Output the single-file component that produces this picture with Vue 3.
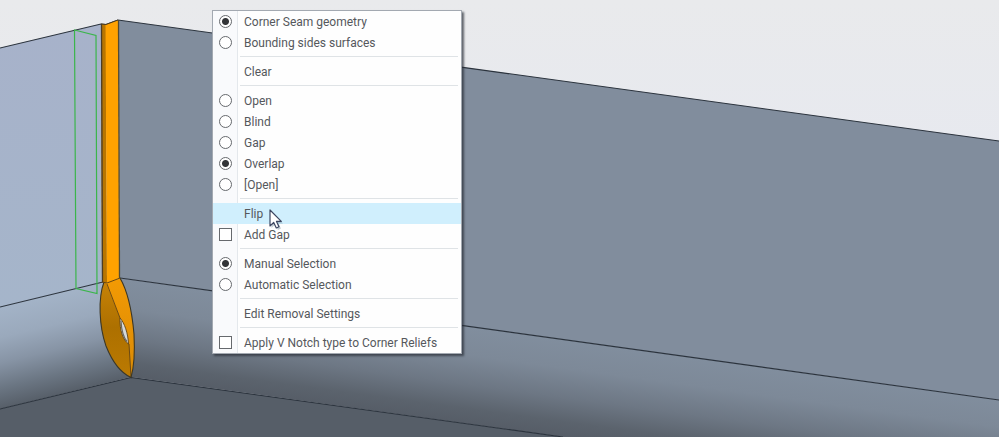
<script setup>
import { reactive } from 'vue'

const choice = reactive({ surface: 'geometry', seam: 'overlap', selection: 'manual' })
const flags = reactive({ addGap: false, vNotch: false })

const sections = [
  [
    { kind: 'radio', group: 'surface', value: 'geometry', label: 'Corner Seam geometry' },
    { kind: 'radio', group: 'surface', value: 'sides', label: 'Bounding sides surfaces' },
  ],
  [{ kind: 'action', label: 'Clear' }],
  [
    { kind: 'radio', group: 'seam', value: 'open', label: 'Open' },
    { kind: 'radio', group: 'seam', value: 'blind', label: 'Blind' },
    { kind: 'radio', group: 'seam', value: 'gap', label: 'Gap' },
    { kind: 'radio', group: 'seam', value: 'overlap', label: 'Overlap' },
    { kind: 'radio', group: 'seam', value: 'default', label: '[Open]' },
  ],
  [
    { kind: 'action', label: 'Flip', active: true },
    { kind: 'check', flag: 'addGap', label: 'Add Gap' },
  ],
  [
    { kind: 'radio', group: 'selection', value: 'manual', label: 'Manual Selection' },
    { kind: 'radio', group: 'selection', value: 'auto', label: 'Automatic Selection' },
  ],
  [{ kind: 'action', label: 'Edit Removal Settings' }],
  [{ kind: 'check', flag: 'vNotch', label: 'Apply V Notch type to Corner Reliefs' }],
]
</script>

<template>
  <main class="viewport">
    <svg class="model" viewBox="0 0 999 437" preserveAspectRatio="xMinYMin slice" aria-hidden="true">
      <defs>
        <linearGradient id="sky" x1="0" y1="0" x2="0" y2="1">
          <stop offset="0" stop-color="#e9eaec" />
          <stop offset="0.35" stop-color="#e7e9ef" />
        </linearGradient>
        <linearGradient id="leftWall" x1="0" y1="0" x2="0" y2="1">
          <stop offset="0" stop-color="#a7b2ca" />
          <stop offset="1" stop-color="#a5b5ca" />
        </linearGradient>
        <linearGradient id="leftBend" gradientUnits="userSpaceOnUse" x1="0" y1="307" x2="23" y2="403">
          <stop offset="0" stop-color="#a3b3c7" />
          <stop offset="0.3" stop-color="#9aa9bc" />
          <stop offset="0.55" stop-color="#8794a5" />
          <stop offset="0.8" stop-color="#6b7683" />
          <stop offset="1" stop-color="#575f69" />
        </linearGradient>
        <linearGradient id="rightBend" gradientUnits="userSpaceOnUse" x1="300" y1="303" x2="287" y2="399">
          <stop offset="0" stop-color="#818e9e" />
          <stop offset="0.3" stop-color="#7d8998" />
          <stop offset="0.6" stop-color="#6d7784" />
          <stop offset="0.85" stop-color="#5b636d" />
          <stop offset="1" stop-color="#565d67" />
        </linearGradient>
        <linearGradient id="relief" x1="0" y1="0" x2="0" y2="1">
          <stop offset="0" stop-color="#c98408" />
          <stop offset="0.5" stop-color="#ad7000" />
          <stop offset="1" stop-color="#bb7a02" />
        </linearGradient>
        <linearGradient id="reliefEdge" x1="0" y1="0" x2="0" y2="1">
          <stop offset="0" stop-color="#f39a04" />
          <stop offset="1" stop-color="#d98a05" />
        </linearGradient>
      </defs>

      <rect width="999" height="437" fill="url(#sky)" />
      <path d="M0 409 L131 377 L563 437 H0Z" fill="#565e68" />
      <path d="M0 48 L101 24 L103 282 L0 307Z" fill="url(#leftWall)" />
      <path d="M0 307 L103 282 L131 377 L0 409Z" fill="url(#leftBend)" />
      <path d="M118 20 L999 141 V400 L120 278Z" fill="#818d9d" />
      <path d="M119 278 L999 400 V437 H563 L131 377Z" fill="url(#rightBend)" />

      <g fill="none" stroke="#2b333d" stroke-width="1.1">
        <path d="M0 48 L101 24 L106 24.500 L118 20 L999 141" />
        <path d="M0 307 L103 282 M120 278 L999 400" />
        <path d="M0 409 L131 377.500 L563 437" />
      </g>

      <path d="M101 24 L106 24.500 L107 283 L102 282Z" fill="#b87500" />
      <path d="M105.500 24.500 L118.500 20 L119.500 278 L107 283Z" fill="#ffa200" />
      <path d="M101.500 24 L102.500 282" stroke="#4d3d24" stroke-width="1.300" />
      <path d="M118.500 20 L119.500 278" stroke="#514b36" stroke-width="1.300" />
      <path d="M101 24 L106 24.500 L118 20" fill="none" stroke="#4b3a1c" />

      <path d="M104 282 C98 298 99 326 106 346 C112 361 121 373 131 377 C134 367 135 352 134 334 C132 311 127 290 120 278 L107 283Z" fill="url(#relief)" />
      <path d="M106 283 L120 278 C127 290 132 311 134 334 C135 352 134 367 131 377 L129 344 L120 318Z" fill="url(#reliefEdge)" />
      <path d="M120 318 C119.500 330 123 340 128.500 344 C128 333 124.500 323 120 318Z" fill="#d5d8da" stroke="#604316" stroke-width="0.900" />
      <path d="M121 321 C121.500 330 124 338 127 341.500" fill="none" stroke="#6b6860" stroke-width="1.200" />
      <path d="M107 284 L120 318 M129 344 L131 377" fill="none" stroke="#604316" stroke-width="0.900" />
      <path d="M104 282 C98 298 99 326 106 346 C112 361 121 373 131 377.500 C134 367 135 352 134 334 C132 311 127 290 120 278" fill="none" stroke="#3b3727" stroke-width="1.100" />
      <path d="M102 282 L107 283 L120 278" fill="none" stroke="#684510" />

      <path d="M74.500 30 L96 35.500 L97 293.500 L76 288.500Z" fill="none" stroke="#3bb54b" stroke-width="1.200" />
    </svg>

    <form class="menu" aria-label="Corner seam options" @submit.prevent>
      <template v-for="(items, index) in sections" :key="index">
        <hr v-if="index" class="separator" />
        <template v-for="item in items" :key="item.label">
          <button v-if="item.kind === 'action'" type="button" class="item" :class="{ active: item.active }">
            <span class="text">{{ item.label }}</span>
          </button>
          <label v-else class="item">
            <input
              v-if="item.kind === 'radio'"
              v-model="choice[item.group]"
              type="radio"
              class="mark round"
              :name="item.group"
              :value="item.value"
            />
            <input v-else v-model="flags[item.flag]" type="checkbox" class="mark" />
            <span class="text">{{ item.label }}</span>
          </label>
        </template>
      </template>
    </form>

    <svg class="pointer" viewBox="0 0 16 22" aria-hidden="true">
      <path d="M2.500 3 V19 L6 15.500 L9 21 L12 19.500 L9.500 14.500 H14Z" fill="#6f8796" opacity="0.400" />
      <path d="M1 1 V17 L4.700 13.500 L7.300 19 L10 17.800 L7.500 12.400 H12.300Z" fill="#fff" stroke="#3c4560" stroke-width="1.200" stroke-linejoin="round" />
    </svg>
  </main>
</template>

<style>
body {
  margin: 0;
}
</style>

<style scoped>
.viewport {
  position: relative;
  min-height: 100vh;
  overflow: hidden;
  background: #e8eaed;
  font-family: Roboto, "Open Sans", sans-serif;
}

.model {
  display: block;
  width: 100%;
  height: 100vh;
}

.menu {
  position: absolute;
  top: 10px;
  left: 212px;
  box-sizing: border-box;
  width: 250px;
  border: 1px solid #a3a9b1;
  background: linear-gradient(to right, #f9fafc 24px, #e4e8ec 24px, #e4e8ec 25px, #fefefe 25px);
  box-shadow: 2px 2px 2px rgba(40, 46, 54, 0.7);
}

.item {
  display: grid;
  grid-template-columns: 24px 1fr;
  align-items: center;
  box-sizing: border-box;
  width: 100%;
  height: 21px;
  padding: 0;
  border: 0;
  background: none;
  color: #55585c;
  font-family: inherit;
  font-size: 12px;
  line-height: 20px;
  text-align: left;
}

.item.active {
  background: #d0effd;
}

.text {
  grid-column: 2;
  padding-left: 7px;
  white-space: nowrap;
}

.mark {
  appearance: none;
  box-sizing: border-box;
  width: 13px;
  height: 13px;
  margin: 0 0 0 6px;
  border: 1px solid #66696d;
  background: #fff;
}

.round {
  border-radius: 50%;
}

.round:checked {
  background: radial-gradient(circle, #333538 3px, #fff 4px);
}

.separator {
  height: 1px;
  margin: 3px 3px 4px 27px;
  border: 0;
  background: #dfe3e6;
}

.pointer {
  position: absolute;
  top: 209px;
  left: 269px;
  width: 16px;
  height: 22px;
}
</style>
